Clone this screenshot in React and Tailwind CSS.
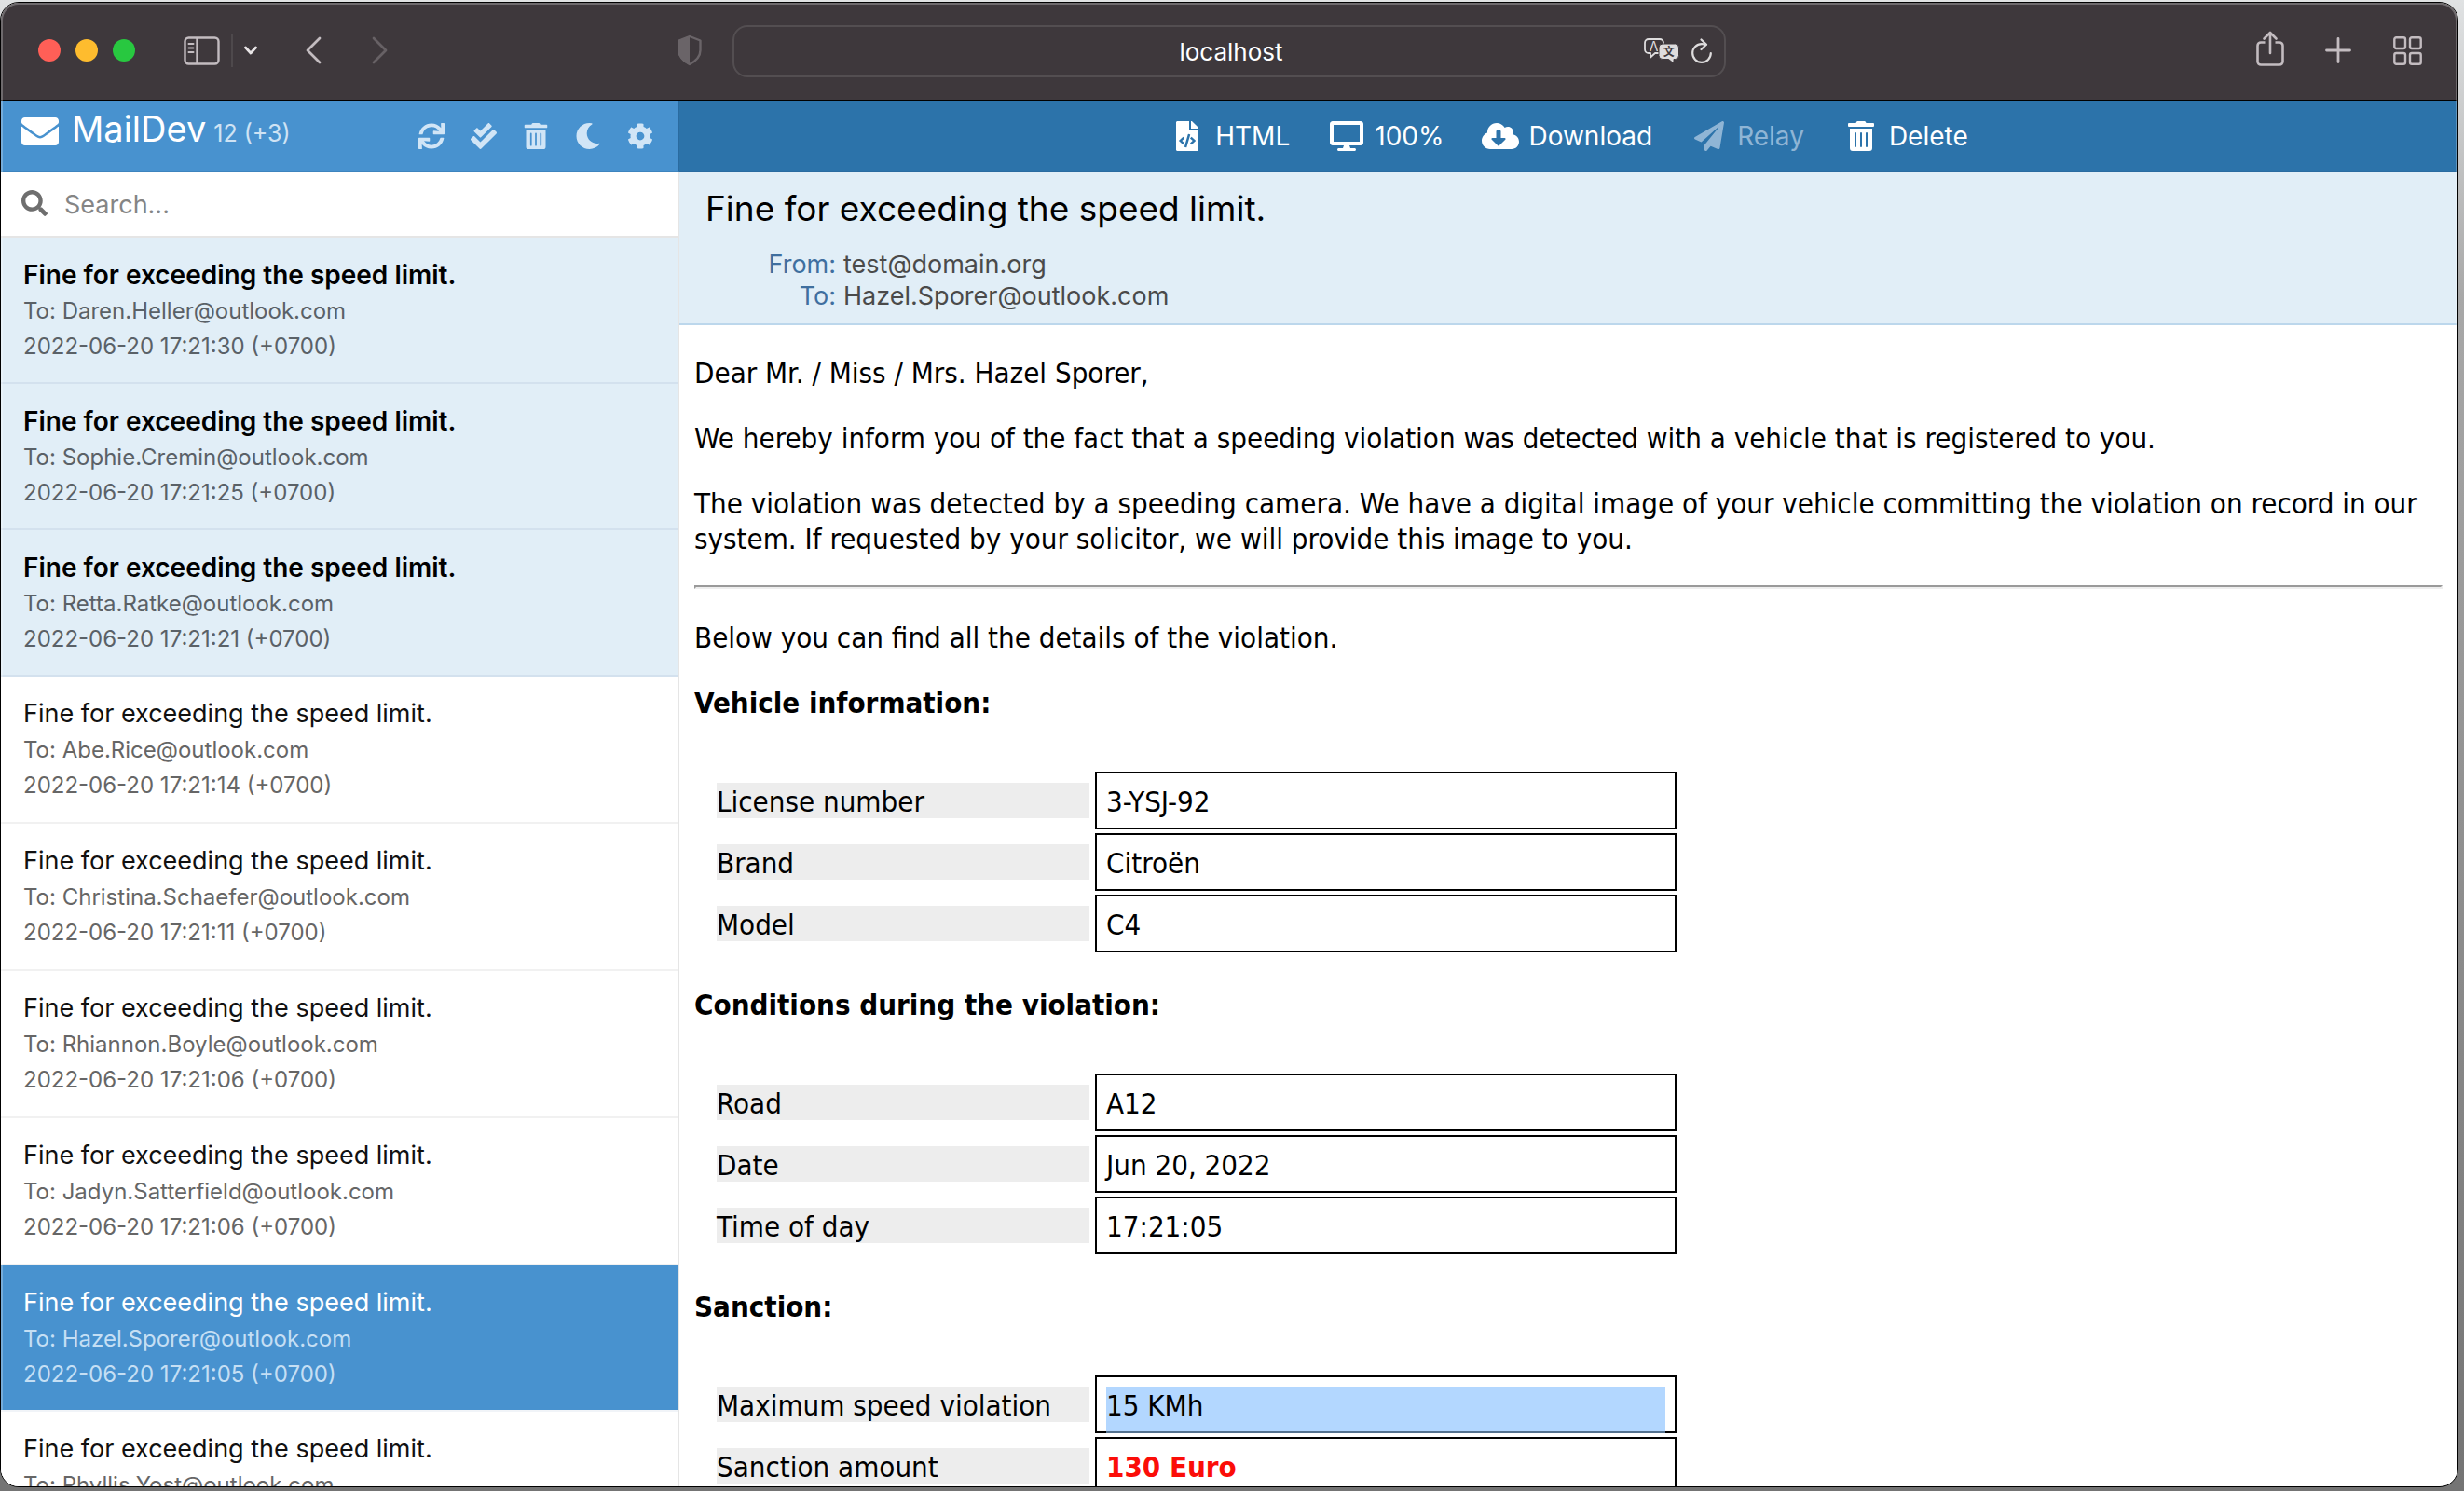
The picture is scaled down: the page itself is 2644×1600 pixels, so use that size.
import React from "react";
import {
  FaEnvelope,
  FaSync,
  FaCheckDouble,
  FaTrashAlt,
  FaMoon,
  FaCog,
  FaSearch,
  FaFileCode,
  FaDesktop,
  FaCloudDownloadAlt,
  FaPaperPlane,
} from "react-icons/fa";

const SUBJECT = "Fine for exceeding the speed limit.";

const messages = [
  { to: "Daren.Heller@outlook.com", date: "2022-06-20 17:21:30 (+0700)", state: "unread" },
  { to: "Sophie.Cremin@outlook.com", date: "2022-06-20 17:21:25 (+0700)", state: "unread" },
  { to: "Retta.Ratke@outlook.com", date: "2022-06-20 17:21:21 (+0700)", state: "unread" },
  { to: "Abe.Rice@outlook.com", date: "2022-06-20 17:21:14 (+0700)", state: "read" },
  { to: "Christina.Schaefer@outlook.com", date: "2022-06-20 17:21:11 (+0700)", state: "read" },
  { to: "Rhiannon.Boyle@outlook.com", date: "2022-06-20 17:21:06 (+0700)", state: "read" },
  { to: "Jadyn.Satterfield@outlook.com", date: "2022-06-20 17:21:06 (+0700)", state: "read" },
  { to: "Hazel.Sporer@outlook.com", date: "2022-06-20 17:21:05 (+0700)", state: "selected" },
  { to: "Phyllis.Yost@outlook.com", date: "2022-06-20 17:21:05 (+0700)", state: "read" },
];

const itemStyles = {
  unread: {
    row: "bg-[#e1eef7] border-[#d3e1ee] pb-[19px]",
    subject: "text-[28px] font-semibold text-black",
    meta: "text-[#5a6167]",
  },
  read: {
    row: "bg-white border-[#f1f1f1] pb-5",
    subject: "text-[27px] text-[#111111]",
    meta: "text-[#666666]",
  },
  selected: {
    row: "bg-[#4892cf] border-[#f1f4f8] pb-[19px]",
    subject: "text-[27px] text-white",
    meta: "text-[#c5dff4]",
  },
};

const sections = [
  {
    title: "Vehicle information:",
    rows: [
      { label: "License number", value: "3-YSJ-92" },
      { label: "Brand", value: "Citroën" },
      { label: "Model", value: "C4" },
    ],
  },
  {
    title: "Conditions during the violation:",
    rows: [
      { label: "Road", value: "A12" },
      { label: "Date", value: "Jun 20, 2022" },
      { label: "Time of day", value: "17:21:05" },
    ],
  },
  {
    title: "Sanction:",
    rows: [
      { label: "Maximum speed violation", value: "15 KMh", selected: true },
      { label: "Sanction amount", value: "130 Euro", alert: true },
    ],
  },
];

function BrowserBar() {
  return (
    <div className="grid h-[105px] shrink-0 grid-cols-[1fr_1066px_1fr] items-center border-b border-black bg-[#3e383c] text-[#c3bcc0]">
      <div className="flex items-center pb-0.5 pl-10">
        <div className="flex gap-4">
          <button aria-label="Close" className="size-6 rounded-full bg-[#ff5f57]" />
          <button aria-label="Minimise" className="size-6 rounded-full bg-[#febc2e]" />
          <button aria-label="Full screen" className="size-6 rounded-full bg-[#28c840]" />
        </div>
        <button aria-label="Sidebar" className="ml-[52px]">
          <svg width="39" height="31" viewBox="0 0 39 31" fill="none" stroke="currentColor" strokeWidth="2.4">
            <rect x="1.5" y="1.5" width="36" height="28" rx="4" />
            <path d="M14.5 1.5v28" />
            <path d="M5.5 8h5M5.5 12.5h5M5.5 17h5" strokeWidth="2" strokeLinecap="round" />
          </svg>
        </button>
        <div className="ml-3 h-9 w-0.5 bg-[#4e494c]" />
        <button aria-label="Tab groups" className="ml-3 text-[#e8e4e6]">
          <svg width="14" height="10" viewBox="0 0 14 10" fill="none" stroke="currentColor" strokeWidth="2.8" strokeLinecap="round" strokeLinejoin="round">
            <path d="M1.5 2L7 8l5.500-6" />
          </svg>
        </button>
        <button aria-label="Back" className="ml-[52px]">
          <svg width="17" height="30" viewBox="0 0 17 30" fill="none" stroke="currentColor" strokeWidth="2.8" strokeLinecap="round" strokeLinejoin="round">
            <path d="M15 2L2 15l13 13" />
          </svg>
        </button>
        <button aria-label="Forward" className="ml-[54px] text-[#676165]">
          <svg width="17" height="30" viewBox="0 0 17 30" fill="none" stroke="currentColor" strokeWidth="2.8" strokeLinecap="round" strokeLinejoin="round">
            <path d="M2 2l13 13L2 28" />
          </svg>
        </button>
        <button aria-label="Privacy report" className="mr-8 ml-auto text-[#6a6468]">
          <svg width="28" height="34" viewBox="0 0 28 34">
            <path d="M14 2L25.500 6.500V17c0 7-5 11.500-11.500 15C7.500 28.500 2.500 24 2.500 17V6.500z" fill="none" stroke="currentColor" strokeWidth="2.4" strokeLinejoin="round" />
            <path d="M14 1.500L1.500 6.200V17c0 7.500 5.500 12.200 12.500 16z" fill="currentColor" />
          </svg>
        </button>
      </div>
      <div className="flex h-14 items-center rounded-2xl border-2 border-[#534e51] pr-3">
        <input
          aria-label="Address"
          defaultValue="localhost"
          className="min-w-0 flex-1 bg-transparent pl-[90px] text-center text-[26px] text-white outline-none"
        />
        <button aria-label="Translate" className="text-[#dedcdd]">
          <svg width="38" height="28" viewBox="0 0 38 28">
            <path d="M5 1h12a4 4 0 0 1 4 4v7a4 4 0 0 1-4 4h-5l-5 4.500V16H5a4 4 0 0 1-4-4V5a4 4 0 0 1 4-4z" fill="none" stroke="currentColor" strokeWidth="1.8" strokeLinejoin="round" />
            <text x="10.5" y="13.5" textAnchor="middle" fill="currentColor" fontSize="14" fontFamily="Inter, sans-serif">A</text>
            <path d="M20 6h13.500a4 4 0 0 1 4 4v8.500a4 4 0 0 1-4 4H32V27l-5.500-4.500H20a4 4 0 0 1-4-4V10a4 4 0 0 1 4-4z" fill="currentColor" stroke="#3e383c" strokeWidth="1" />
            <text x="26.7" y="18.7" textAnchor="middle" fill="#3e383c" fontSize="12" fontWeight="700" fontFamily="'Noto Sans CJK SC', sans-serif">文</text>
          </svg>
        </button>
        <button aria-label="Reload" className="ml-3 text-[#dedcdd]">
          <svg width="24" height="28" viewBox="0 0 24 28" fill="none" stroke="currentColor" strokeWidth="2.2" strokeLinecap="round" strokeLinejoin="round">
            <path d="M21.800 16A9.800 9.800 0 1 1 12 6.200c1.800 0 3 .2 4.500.6" />
            <path d="M11.500 1.500l5.500 5.300-5.500 5.200" />
          </svg>
        </button>
      </div>
      <div className="flex items-center justify-end pr-[38px] pb-0.5">
        <button aria-label="Share" className="mb-1">
          <svg width="30" height="38" viewBox="0 0 30 38" fill="none" stroke="currentColor" strokeWidth="2.6" strokeLinecap="round" strokeLinejoin="round">
            <path d="M9.500 12.500H5A3.500 3.500 0 0 0 1.500 16v17A3.500 3.500 0 0 0 5 36.500h20a3.500 3.500 0 0 0 3.500-3.500V16a3.500 3.500 0 0 0-3.500-3.500h-4.500" strokeLinecap="butt" />
            <path d="M15 24V2M8.500 8.500L15 2l6.500 6.500" />
          </svg>
        </button>
        <button aria-label="New tab" className="ml-11">
          <svg width="28" height="28" viewBox="0 0 28 28" stroke="currentColor" strokeWidth="2.8" strokeLinecap="round">
            <path d="M14 1.500v25M1.500 14h25" />
          </svg>
        </button>
        <button aria-label="Tab overview" className="ml-[45px]">
          <svg width="31" height="31" viewBox="0 0 31 31" fill="none" stroke="currentColor" strokeWidth="2.4">
            <rect x="1.3" y="1.3" width="11.7" height="11.7" rx="2" />
            <rect x="18" y="1.3" width="11.7" height="11.7" rx="2" />
            <rect x="1.3" y="18" width="11.7" height="11.7" rx="2" />
            <rect x="18" y="18" width="11.7" height="11.7" rx="2" />
          </svg>
        </button>
      </div>
    </div>
  );
}

function Sidebar() {
  const actions = [
    ["Refresh", FaSync],
    ["Mark all as read", FaCheckDouble],
    ["Delete all", FaTrashAlt],
    ["Dark mode", FaMoon],
    ["Settings", FaCog],
  ];
  return (
    <aside className="flex w-[728px] shrink-0 flex-col overflow-hidden">
      <header className="flex h-[77px] shrink-0 items-center border-r-2 border-b-2 border-r-[#2a6ba0] border-b-[#3d84be] bg-[#4892cf] pr-[22px] pl-[22px] text-white">
        <h1 className="flex items-center pb-2.5">
          <FaEnvelope className="mr-3.5 size-10" />
          <span className="flex items-baseline gap-2">
            <span className="text-[38px] leading-10">MailDev</span>
            <span className="text-[25px] leading-10 text-[#cfe3f4]">12 (+3)</span>
          </span>
        </h1>
        <div className="ml-auto flex gap-5 text-[#d1e5f6]">
          {actions.map(([label, Icon]) => (
            <button key={label} aria-label={label}>
              <Icon className="h-7 w-9" />
            </button>
          ))}
        </div>
      </header>
      <div className="flex min-h-0 flex-1 flex-col border-r-2 border-[#e5e5e5]">
        <label className="flex h-[70px] shrink-0 items-center border-b-2 border-[#e5e5e5] pt-0.5 pl-[22px]">
          <FaSearch className="mb-1 size-7 text-[#6e6e6e]" />
          <input
            aria-label="Search"
            placeholder="Search..."
            className="ml-[18px] min-w-0 flex-1 bg-transparent text-[27px] outline-none placeholder:text-[#858585]"
          />
        </label>
        <ul className="min-h-0 flex-1 overflow-hidden">
          {messages.map((m) => {
            const s = itemStyles[m.state];
            return (
              <li key={m.to}>
                <a href="#message" className={"block border-b-2 pt-5 pl-6 " + s.row}>
                  <span className={"block leading-10 " + s.subject}>{SUBJECT}</span>
                  <span className={"block text-2xl leading-[38px] " + s.meta}>To: {m.to}</span>
                  <span className={"block text-2xl leading-[38px] " + s.meta}>{m.date}</span>
                </a>
              </li>
            );
          })}
        </ul>
      </div>
    </aside>
  );
}

function Toolbar() {
  const items = [
    ["HTML", FaFileCode],
    ["100%", FaDesktop],
    ["Download", FaCloudDownloadAlt],
    ["Relay", FaPaperPlane],
    ["Delete", FaTrashAlt],
  ];
  return (
    <nav className="flex h-[77px] shrink-0 items-center justify-center gap-[41px] border-b-2 border-[#2a6ba0] bg-[#2c73aa] text-white">
      {items.map(([label, Icon]) => (
        <button
          key={label}
          disabled={label === "Relay"}
          className="flex items-center gap-2.5 text-[28px] leading-8 disabled:text-[#8fb5d5]"
        >
          <Icon className="h-8 w-10" />
          {label}
        </button>
      ))}
    </nav>
  );
}

function DetailRow({ label, value, selected, alert }) {
  return (
    <tr>
      <th scope="row" className="p-0.5 text-left font-normal">
        <div className="w-[400px] bg-[#ededed] pt-0.5 leading-9">{label}</div>
      </th>
      <td className="p-0">
        <div className="relative w-[624px] border-2 border-black p-2.5">
          {selected && (
            <div className="absolute inset-x-2.5 top-2.5 -bottom-0.5 border-b-2 border-[#547290] bg-[#b3d7ff]" />
          )}
          <div className={"relative pt-0.5 leading-9 " + (alert ? "font-bold text-[#fb0d08]" : "")}>{value}</div>
        </div>
      </td>
    </tr>
  );
}

function Mail() {
  return (
    <main className="flex min-w-0 flex-1 flex-col overflow-hidden">
      <Toolbar />
      <header className="h-[164px] shrink-0 border-b-2 border-[#bcd7ec] bg-[#e1eef7] pt-3.5 pl-7">
        <h2 className="text-[37px] leading-[50px] text-black">{SUBJECT}</h2>
        <dl className="mt-[18px] grid grid-cols-[140px_1fr] gap-x-2 text-[27px] leading-[34px] text-[#4a4a4a]">
          <dt className="text-right text-[#3f6f9f]">From:</dt>
          <dd>test@domain.org</dd>
          <dt className="text-right text-[#3f6f9f]">To:</dt>
          <dd>Hazel.Sporer@outlook.com</dd>
        </dl>
      </header>
      <article className="min-h-0 flex-1 overflow-hidden px-4 pt-8 font-['DejaVu_Sans_Condensed','DejaVu_Sans',sans-serif] text-[31px] leading-[38px] text-black">
        <div className="flex flex-col gap-8">
          <p>Dear Mr. / Miss / Mrs. Hazel Sporer,</p>
          <p>
            We hereby inform you of the fact that a speeding violation was detected with a vehicle that is registered
            to you.
          </p>
          <p>
            The violation was detected by a speeding camera. We have a digital image of your vehicle committing the
            violation on record in our system. If requested by your solicitor, we will provide this image to you.
          </p>
        </div>
        <hr className="mt-[31px] mb-[33px] h-1 border-2 border-t-[#9a9a9a] border-r-[#eeeeee] border-b-[#eeeeee] border-l-[#9a9a9a]" />
        <p className="mb-8">Below you can find all the details of the violation.</p>
        {sections.map((section) => (
          <section key={section.title} className="mb-[33px]">
            <h3 className="font-bold">{section.title}</h3>
            <table className="mt-[51px] ml-[18px] border-separate border-spacing-1">
              <tbody>
                {section.rows.map((row) => (
                  <DetailRow key={row.label} {...row} />
                ))}
              </tbody>
            </table>
          </section>
        ))}
      </article>
    </main>
  );
}

export default function App() {
  return (
    <div className="flex h-screen flex-col bg-linear-to-b from-[#e0e2e3] via-[#a8a8a8] via-20% to-[#747474] pt-0.5 pr-1.5 pb-1 font-['Inter',sans-serif]">
      <div className="relative flex min-h-0 flex-1 flex-col overflow-hidden rounded-[20px] border border-black bg-white">
        <BrowserBar />
        <div className="flex min-h-0 flex-1">
          <Sidebar />
          <Mail />
        </div>
        <div className="pointer-events-none absolute inset-0 rounded-[19px] border-2 border-b-0 border-white/25" />
      </div>
    </div>
  );
}
